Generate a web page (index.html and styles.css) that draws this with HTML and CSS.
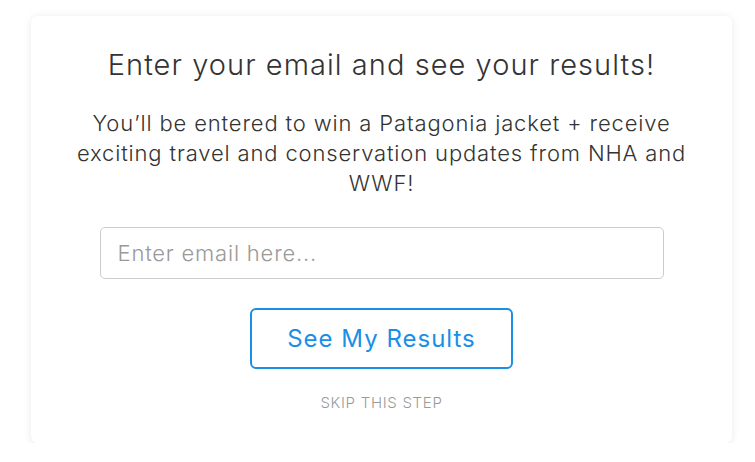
FILE: index.html
```html
<!DOCTYPE html>
<html lang="en">
<head>
<meta charset="utf-8">
<link rel="stylesheet" href="styles.css">
</head>
<body>
<div class="card">
  <h1 class="title">Enter your email and see your results!</h1>
  <p class="lead">You’ll be entered to win a Patagonia jacket + receive exciting travel and conservation updates from NHA and WWF!</p>
  <input class="email" type="text" placeholder="Enter email here...">
  <button class="results">See My Results</button>
  <a class="skip">SKIP THIS STEP</a>
</div>
</body>
</html>
```
FILE: styles.css
```css
html, body { margin: 0; padding: 0; background: #fff; }
body { font-family: Inter, "Open Sans", "Liberation Sans", sans-serif; }
.card {
  box-sizing: border-box;
  width: 701px;
  height: 427px;
  margin: 16px 0 0 31px;
  background: #fff;
  border-radius: 7px;
  box-shadow: 0 1px 8px rgba(0,0,0,0.09);
  display: flex;
  flex-direction: column;
  align-items: center;
  padding-top: 30px;
}
.title {
  margin: 0;
  font-size: 29px;
  font-weight: 300;
  letter-spacing: 1.05px;
  color: #333;
  line-height: 38px;
}
.lead {
  margin: 24px 0 0;
  width: 630px;
  text-align: center;
  font-size: 22px;
  font-weight: 300;
  letter-spacing: 0.85px;
  line-height: 30px;
  color: #333;
}
.email {
  box-sizing: border-box;
  margin-top: 29px;
  width: 564px;
  height: 52px;
  border: 1px solid #ccc;
  border-radius: 5px;
  padding: 0 17px;
  font-family: inherit;
  font-size: 22px;
  font-weight: 300;
  letter-spacing: 0.8px;
  color: #333;
  outline: none;
}
.email::placeholder { color: #999; }
.results {
  box-sizing: border-box;
  margin-top: 29px;
  width: 263px;
  height: 61px;
  background: #fff;
  border: 2px solid #1a8fe6;
  border-radius: 6px;
  font-family: inherit;
  font-size: 24px;
  font-weight: 400;
  letter-spacing: 1px;
  color: #1a8fe6;
  cursor: pointer;
}
.skip {
  margin-top: 25px;
  font-size: 15px;
  line-height: 18px;
  font-weight: 300;
  letter-spacing: 0.7px;
  color: #999;
}
```
